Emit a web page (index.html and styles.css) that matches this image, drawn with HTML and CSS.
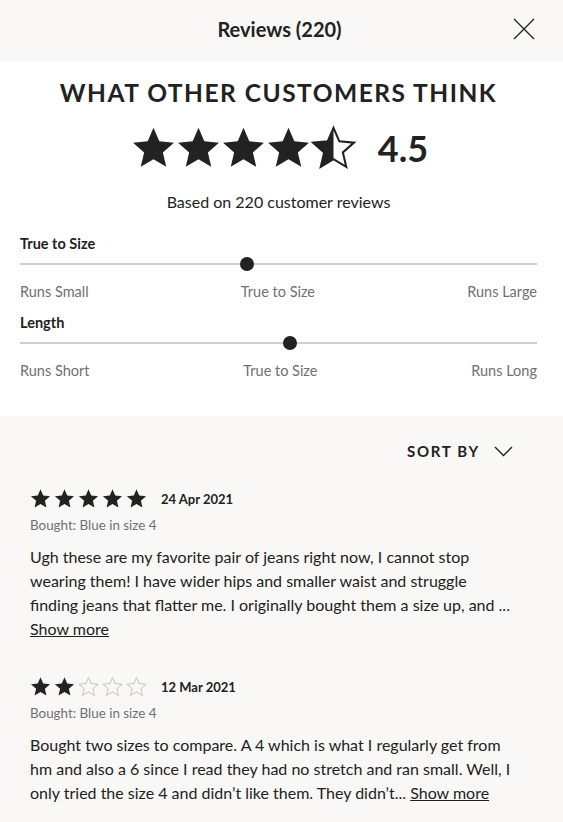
FILE: index.html
```html
<!DOCTYPE html>
<html>
<head>
    <title>Reviews</title>
    <link rel="stylesheet" href="styles.css">
</head>
<body>
    <svg width="0" height="0" class="defs">
        <defs>
            <path id="star" d="M12 1.5l3.1 7.2 7.8.7-5.9 5.2 1.8 7.7L12 18.2l-6.8 4.1 1.8-7.7-5.9-5.2 7.8-.7z"/>
        </defs>
    </svg>

    <div class="header">
        <h1>Reviews (220)</h1>
        <svg class="close" width="22" height="22" viewBox="0 0 22 22"><path d="M1 1l20 20M21 1L1 21" stroke="#222" stroke-width="1.3" fill="none"/></svg>
    </div>

    <div class="summary">
        <h2>WHAT OTHER CUSTOMERS THINK</h2>
        <div class="score">
            <div class="stars big">
                <svg viewBox="0 0 24 24"><use href="#star"/></svg>
                <svg viewBox="0 0 24 24"><use href="#star"/></svg>
                <svg viewBox="0 0 24 24"><use href="#star"/></svg>
                <svg viewBox="0 0 24 24"><use href="#star"/></svg>
                <svg viewBox="0 0 24 24">
                    <clipPath id="half"><rect x="0" y="0" width="12" height="24"/></clipPath>
                    <use href="#star" fill="none" stroke="#222" stroke-width="1.1"/>
                    <use href="#star" clip-path="url(#half)"/>
                </svg>
            </div>
            <span class="avg">4.5</span>
        </div>
        <p class="based">Based on 220 customer reviews</p>

        <div class="fit">
            <div class="fit-title">True to Size</div>
            <div class="track"><span class="dot" style="left: 44%"></span></div>
            <div class="fit-labels"><span>Runs Small</span><span>True to Size</span><span>Runs Large</span></div>
        </div>
        <div class="fit">
            <div class="fit-title">Length</div>
            <div class="track"><span class="dot" style="left: 52.2%"></span></div>
            <div class="fit-labels"><span>Runs Short</span><span>True to Size</span><span>Runs Long</span></div>
        </div>
    </div>

    <div class="reviews">
        <div class="sort">
            <span>SORT BY</span>
            <svg width="19" height="11" viewBox="0 0 19 11"><path d="M1 1l8.5 8.5L18 1" stroke="#222" stroke-width="1.4" fill="none"/></svg>
        </div>

        <div class="review">
            <div class="review-head">
                <div class="stars small">
                    <svg viewBox="0 0 24 24"><use href="#star"/></svg>
                    <svg viewBox="0 0 24 24"><use href="#star"/></svg>
                    <svg viewBox="0 0 24 24"><use href="#star"/></svg>
                    <svg viewBox="0 0 24 24"><use href="#star"/></svg>
                    <svg viewBox="0 0 24 24"><use href="#star"/></svg>
                </div>
                <span class="date">24 Apr 2021</span>
            </div>
            <div class="bought">Bought: Blue in size 4</div>
            <p class="text">Ugh these are my favorite pair of jeans right now, I cannot stop wearing them! I have wider hips and smaller waist and struggle finding jeans that flatter me. I originally bought them a size up, and ...<br><a href="#">Show more</a></p>
        </div>

        <div class="review">
            <div class="review-head">
                <div class="stars small">
                    <svg viewBox="0 0 24 24"><use href="#star"/></svg>
                    <svg viewBox="0 0 24 24"><use href="#star"/></svg>
                    <svg viewBox="0 0 24 24" class="empty"><use href="#star"/></svg>
                    <svg viewBox="0 0 24 24" class="empty"><use href="#star"/></svg>
                    <svg viewBox="0 0 24 24" class="empty"><use href="#star"/></svg>
                </div>
                <span class="date">12 Mar 2021</span>
            </div>
            <div class="bought">Bought: Blue in size 4</div>
            <p class="text">Bought two sizes to compare. A 4 which is what I regularly get from hm and also a 6 since I read they had no stretch and ran small. Well, I only tried the size 4 and didn’t like them. They didn’t... <a href="#">Show more</a></p>
        </div>
    </div>
</body>
</html>
```

FILE: styles.css
```css
body { margin: 0; font-family: Lato, "Open Sans", sans-serif; color: #222; background: #f9f8f6; }
.defs { position: absolute; }

.header { height: 61px; display: flex; align-items: center; justify-content: center; position: relative; background: #f9f8f6; }
.header h1 { margin: 0 0 4px -4px; font-size: 20px; font-weight: 700; }
.close { position: absolute; right: 28px; top: 18px; }

.summary { background: #fff; padding: 18px 26px 36px 20px; }
.summary h2 { margin: 0; text-align: center; font-size: 24.5px; font-weight: 700; letter-spacing: 1.5px; line-height: 28px; }
.score { display: flex; justify-content: center; align-items: center; margin-top: 18px; gap: 22px; padding-left: 2px; }
.stars { display: flex; fill: #222; }
.stars.big svg { width: 45px; height: 45px; }
.avg { font-size: 36px; font-weight: 700; }
.based { margin: 22px 0 0; text-align: center; font-size: 16px; line-height: 20px; }

.fit { margin-top: 23px; }
.fit + .fit { margin-top: 13px; }
.fit-title { font-size: 14.5px; font-weight: 700; line-height: 18px; }
.track { position: relative; height: 2px; background: #cfcfcf; margin-top: 10px; }
.dot { position: absolute; top: -6px; width: 14px; height: 14px; margin-left: -7px; border-radius: 50%; background: #222; }
.fit-labels { display: flex; justify-content: space-between; margin-top: 18px; font-size: 14.5px; color: #707070; line-height: 18px; }

.reviews { padding: 26px 50px 20px 30px; }
.sort { display: flex; justify-content: flex-end; align-items: center; gap: 14px; margin-right: -20px; padding-right: 20px; font-size: 15px; font-weight: 700; letter-spacing: 1.7px; }
.review { margin-top: 28px; }
.review + .review { margin-top: 35px; }
.review-head { display: flex; align-items: center; gap: 14px; }
.stars.small { gap: 3px; }
.stars.small svg { width: 21px; height: 21px; }
.stars.small svg.empty { fill: none; stroke: #bbb; stroke-width: 1; }
.date { font-size: 13px; font-weight: 700; }
.bought { margin-top: 8px; font-size: 13.4px; color: #707070; }
.text { margin: 12px 0 0; font-size: 16px; line-height: 24px; }
.text a { color: #222; }
```
